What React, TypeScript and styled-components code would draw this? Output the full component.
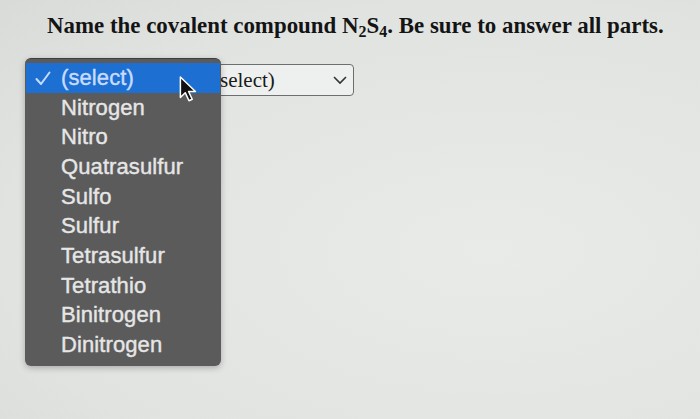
import React from 'react';
import styled, { createGlobalStyle } from 'styled-components';

const Global = createGlobalStyle`
  html, body {
    margin: 0;
    padding: 0;
    background: #e3e5e3;
  }
  body {
    width: 700px;
    height: 419px;
    overflow: hidden;
  }
`;

const Page = styled.div`
  position: relative;
  width: 700px;
  height: 419px;
  background: radial-gradient(ellipse at 70% 60%, #e9ebe9 0%, #e1e3e1 70%, #d9dbd9 100%);
  padding: 11px 0 0 47px;
  box-sizing: border-box;
`;

const Title = styled.h1`
  margin: 0;
  font-family: 'Liberation Serif', 'Times New Roman', serif;
  font-weight: bold;
  font-size: 22.9px;
  line-height: 30px;
  color: #141414;

  sub {
    font-size: 16px;
    vertical-align: -4px;
    line-height: 0;
  }
`;

const SelectRow = styled.div`
  margin-top: 23px;
  padding-left: 153px;
  display: flex;
`;

const SelectBox = styled.div`
  width: 154px;
  height: 32px;
  box-sizing: border-box;
  border: 1px solid #6d6f6e;
  border-radius: 4px;
  background: #eef0ef;
  display: flex;
  align-items: center;
  justify-content: space-between;
  padding: 0 5px 0 12px;
  font-family: 'Liberation Serif', 'Times New Roman', serif;
  font-size: 21px;
  color: #1a1a1a;
`;

const Menu = styled.ul`
  position: absolute;
  left: 25px;
  top: 58px;
  width: 196px;
  margin: 0;
  padding: 4px 0 6px;
  list-style: none;
  background: #5b5b5b;
  border-radius: 6px;
  border-top: 1px solid #3e3e3e;
  box-shadow: 0 2px 6px rgba(0, 0, 0, 0.25);
  font-family: 'Liberation Sans', Arial, sans-serif;
`;

const Item = styled.li<{ $active?: boolean }>`
  position: relative;
  height: 29.7px;
  display: flex;
  align-items: center;
  padding-left: 35px;
  margin: 0 1px;
  font-size: 22px;
  letter-spacing: 0.1px;
  color: ${(p) => (p.$active ? '#c8dcff' : '#e6e6e6')};
  background: ${(p) => (p.$active ? '#1d6fd2' : 'transparent')};
  -webkit-text-stroke: 0.4px currentColor;
`;

const Check = styled.svg`
  position: absolute;
  left: 9px;
  top: 8px;
`;

const Cursor = styled.svg`
  position: absolute;
  left: 178px;
  top: 76px;
`;

const options = [
  'Nitrogen',
  'Nitro',
  'Quatrasulfur',
  'Sulfo',
  'Sulfur',
  'Tetrasulfur',
  'Tetrathio',
  'Binitrogen',
  'Dinitrogen',
];

const App: React.FC = () => {
  return (
    <Page>
      <Global />
      <Title>
        Name the covalent compound N<sub>2</sub>S<sub>4</sub>. Be sure to answer all parts.
      </Title>
      <SelectRow>
        <SelectBox>
          <span>(select)</span>
          <svg width="16" height="10" viewBox="0 0 16 10">
            <path d="M2 2 L8 8 L14 2" fill="none" stroke="#333" strokeWidth="1.6" />
          </svg>
        </SelectBox>
      </SelectRow>
      <Menu>
        <Item $active>
          <Check width="16" height="15" viewBox="0 0 16 15">
            <path d="M1.5 8 L6 13 L14.5 1.5" fill="none" stroke="#c8dcff" strokeWidth="2" strokeLinecap="round" strokeLinejoin="round" />
          </Check>
          (select)
        </Item>
        {options.map((o) => (
          <Item key={o}>{o}</Item>
        ))}
      </Menu>
      <Cursor width="22" height="28" viewBox="0 0 20 26">
        <path
          d="M2 1 L2 20 L6.5 15.5 L10 23 L13 21.6 L9.6 14.4 L16 14.4 Z"
          fill="#111"
          stroke="#fff"
          strokeWidth="1.4"
          strokeLinejoin="round"
        />
      </Cursor>
    </Page>
  );
};

export default App;
